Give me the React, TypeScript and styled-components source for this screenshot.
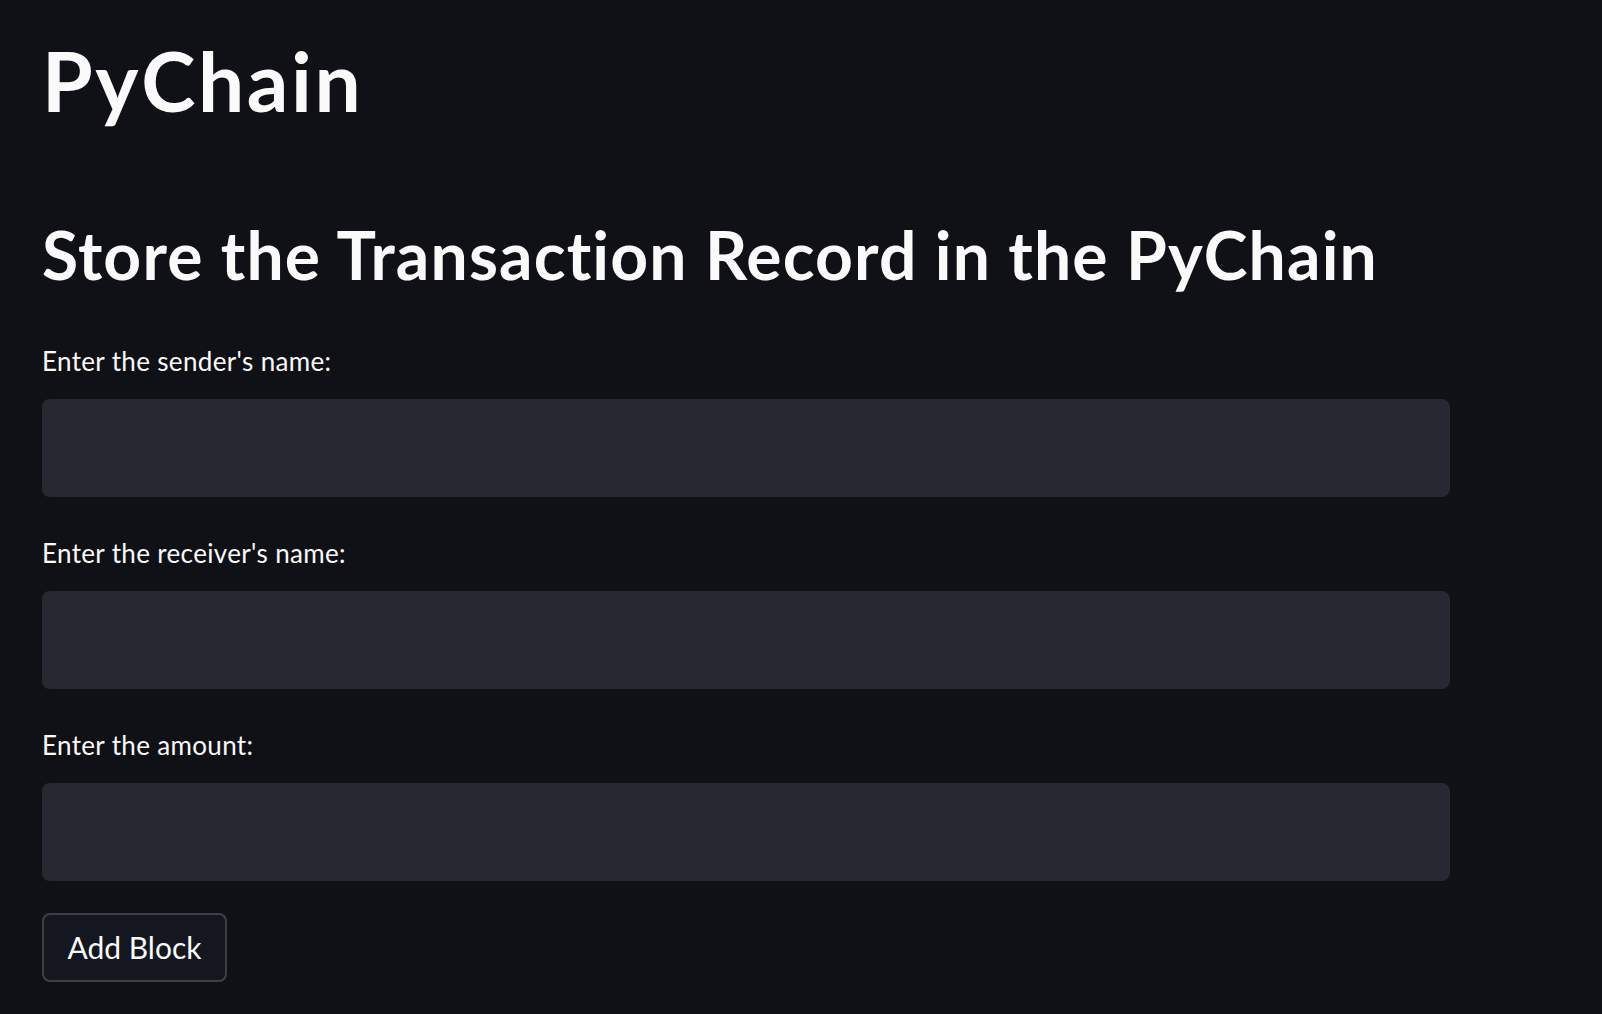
import React from "react";
import styled, { createGlobalStyle } from "styled-components";

const Global = createGlobalStyle`
  html, body {
    margin: 0;
    padding: 0;
    background: #101117;
  }
  body {
    font-family: Lato, "Noto Sans", sans-serif;
    color: #fafafa;
    font-variant-ligatures: none;
  }
  * { box-sizing: border-box; }
`;

const Page = styled.main`
  min-height: 1014px;
  background: #101117;
  padding: 31px 0 0 42px;
  display: flex;
  flex-direction: column;
  width: 1450px;
`;

const Title = styled.h1`
  margin: 0;
  font-size: 82px;
  line-height: 1.2;
  font-weight: 700;
  letter-spacing: 2.6px;
  color: #fafafa;
`;

const Subtitle = styled.h2`
  margin: 86px 0 0;
  font-size: 66px;
  line-height: 1.2;
  font-weight: 700;
  letter-spacing: 1.15px;
  color: #fafafa;
`;

const Form = styled.form`
  display: flex;
  flex-direction: column;
  gap: 40px;
  margin-top: 50px;
`;

const Field = styled.div`
  display: flex;
  flex-direction: column;
  gap: 22px;
`;

const Label = styled.label`
  padding-top: 1px;
  font-size: 26px;
  line-height: 1.2;
  font-weight: 400;
  letter-spacing: 0.35px;
  color: #fafafa;
`;

const Input = styled.input`
  width: 1408px;
  height: 98px;
  border: none;
  outline: none;
  border-radius: 8px;
  background: #272831;
  color: #fafafa;
  font-family: inherit;
  font-size: 28px;
  padding: 0 24px;
`;

const Button = styled.button`
  align-self: flex-start;
  margin-top: -8px;
  width: 185px;
  height: 69px;
  padding: 0 0 2px;
  border-radius: 8px;
  border: 2px solid #3e3f45;
  background: #141720;
  color: #fafafa;
  font-family: inherit;
  font-size: 30px;
  font-weight: 400;
  cursor: pointer;
`;

export default function App() {
  return (
    <>
      <Global />
      <Page>
        <Title>PyChain</Title>
        <Subtitle>Store the Transaction Record in the PyChain</Subtitle>
        <Form onSubmit={(e) => e.preventDefault()}>
          <Field>
            <Label>Enter the sender's name:</Label>
            <Input type="text" />
          </Field>
          <Field>
            <Label>Enter the receiver's name:</Label>
            <Input type="text" />
          </Field>
          <Field>
            <Label>Enter the amount:</Label>
            <Input type="text" />
          </Field>
          <Button type="submit">Add Block</Button>
        </Form>
      </Page>
    </>
  );
}
